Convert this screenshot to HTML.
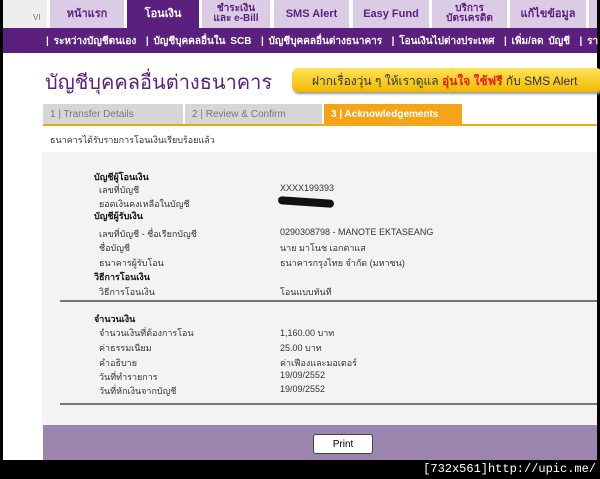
<!DOCTYPE html>
<html><head><meta charset="utf-8"><style>
*{margin:0;padding:0;box-sizing:border-box}
body{width:600px;height:479px;overflow:hidden;background:#000;position:relative;font-family:"Liberation Sans","Noto Sans CJK SC",sans-serif}
.a{position:absolute}
.tab{position:absolute;top:0;height:28px;background:#dccbe4;color:#5b1f7e;font-weight:bold;font-size:11px;text-align:center;display:flex;align-items:center;justify-content:center;line-height:10px}
.sm{font-size:9px;color:#333;position:absolute;white-space:nowrap}
.b{font-weight:bold;color:#111}
</style></head><body>
<div class="a" style="left:3px;top:0;width:594px;height:460px;background:#fff"></div>
<div class="a" style="left:3px;top:0;width:44px;height:28px;background:#eee;font-size:8px;color:#777;padding:13px 0 0 30px">VI</div>
<div class="tab" style="left:50px;width:74px">หน้าแรก</div>
<div class="tab" style="left:127px;width:72px;background:#5b1f7e;color:#fff">โอนเงิน</div>
<div class="tab" style="left:202px;width:68px;font-size:10px">ชำระเงิน<br>และ e-Bill</div>
<div class="tab" style="left:274px;width:75px">SMS Alert</div>
<div class="tab" style="left:353px;width:76px">Easy Fund</div>
<div class="tab" style="left:432px;width:75px;font-size:10px">บริการ<br>บัตรเครดิต</div>
<div class="tab" style="left:510px;width:76px">แก้ไขข้อมูล</div>
<div class="tab" style="left:589px;width:8px"></div>
<div class="a" style="left:3px;top:28px;width:594px;height:25px;background:#5b1f7e"></div>
<div class="a" style="left:46px;top:34px;color:#fff;font-size:10px;font-weight:bold;white-space:nowrap;word-spacing:2px">| ระหว่างบัญชีตนเอง &nbsp;| บัญชีบุคคลอื่นใน SCB &nbsp;| บัญชีบุคคลอื่นต่างธนาคาร &nbsp;| โอนเงินไปต่างประเทศ &nbsp;| เพิ่ม/ลด บัญชี &nbsp;| รา</div>
<div class="a" style="left:45px;top:66px;font-size:20px;color:#5b1f7e;white-space:nowrap">บัญชีบุคคลอื่นต่างธนาคาร</div>
<div class="a" style="left:292px;top:68px;width:310px;height:24px;border-radius:6px;background:linear-gradient(#ffe45a,#f2b800);box-shadow:1px 2px 2px #999;font-size:12px;color:#333;padding:4px 0 0 20px;white-space:nowrap">ฝากเรื่องวุ่น ๆ ให้เราดูแล <span style="color:#e8201a;font-weight:bold">อุ่นใจ ใช้ฟรี</span> กับ SMS Alert</div>
<div class="a" style="left:43px;top:104px;width:140px;height:20px;background:#d6d6d6;color:#777;font-size:10px;padding:5px 7px">1 | Transfer Details</div>
<div class="a" style="left:185px;top:104px;width:137px;height:20px;background:#d6d6d6;color:#777;font-size:10px;padding:5px 7px">2 | Review &amp; Confirm</div>
<div class="a" style="left:324px;top:104px;width:138px;height:20px;background:#f5a418;color:#fff;font-weight:bold;font-size:10px;padding:5px 7px">3 | Acknowledgements</div>
<div class="a" style="left:43px;top:124px;width:554px;height:2px;background:#f5a418"></div>
<div class="sm" style="left:50px;top:133px">ธนาคารได้รับรายการโอนเงินเรียบร้อยแล้ว</div>
<div class="a" style="left:42px;top:152px;width:555px;height:273px;background:#f3f3f3"></div>
<div class="a" style="left:60px;top:300px;width:537px;height:2px;background:#777"></div>
<div class="a" style="left:60px;top:403px;width:537px;height:2px;background:#777"></div>
<div class="a" style="left:278px;top:198px;width:56px;height:8px;border-radius:4px;background:#111;transform:rotate(4deg)"></div>
<div class="sm b" style="left:94px;top:170px">บัญชีผู้โอนเงิน</div>
<div class="sm" style="left:99px;top:183px">เลขที่บัญชี</div><div class="sm" style="left:280px;top:183px">XXXX199393</div>
<div class="sm" style="left:99px;top:197px">ยอดเงินคงเหลือในบัญชี</div>
<div class="sm b" style="left:94px;top:209px">บัญชีผู้รับเงิน</div>
<div class="sm" style="left:99px;top:227px">เลขที่บัญชี - ชื่อเรียกบัญชี</div><div class="sm" style="left:280px;top:227px">0290308798 - MANOTE EKTASEANG</div>
<div class="sm" style="left:99px;top:241px">ชื่อบัญชี</div><div class="sm" style="left:280px;top:241px">นาย มาโนช เอกตาแส</div>
<div class="sm" style="left:99px;top:256px">ธนาคารผู้รับโอน</div><div class="sm" style="left:280px;top:256px">ธนาคารกรุงไทย จำกัด (มหาชน)</div>
<div class="sm b" style="left:94px;top:270px">วิธีการโอนเงิน</div>
<div class="sm" style="left:99px;top:285px">วิธีการโอนเงิน</div><div class="sm" style="left:280px;top:285px">โอนแบบทันที</div>
<div class="sm b" style="left:94px;top:312px">จำนวนเงิน</div>
<div class="sm" style="left:99px;top:326px">จำนวนเงินที่ต้องการโอน</div><div class="sm" style="left:280px;top:326px">1,160.00 บาท</div>
<div class="sm" style="left:99px;top:341px">ค่าธรรมเนียม</div><div class="sm" style="left:280px;top:341px">25.00 บาท</div>
<div class="sm" style="left:99px;top:356px">คำอธิบาย</div><div class="sm" style="left:280px;top:356px">ค่าเฟืองและมอเตอร์</div>
<div class="sm" style="left:99px;top:370px">วันที่ทำรายการ</div><div class="sm" style="left:280px;top:370px">19/09/2552</div>
<div class="sm" style="left:99px;top:384px">วันที่หักเงินจากบัญชี</div><div class="sm" style="left:280px;top:384px">19/09/2552</div>
<div class="a" style="left:43px;top:425px;width:554px;height:35px;background:#9b84ae"></div>
<div class="a" style="left:313px;top:434px;width:60px;height:20px;background:#fff;border:1px solid #444;border-radius:3px;font-size:10px;text-align:center;padding-top:4px">Print</div>
<div class="a" style="right:4px;top:462px;color:#fff;font-family:'Liberation Mono',monospace;font-size:12px">[732x561]http://upic.me/</div>
</body></html>
